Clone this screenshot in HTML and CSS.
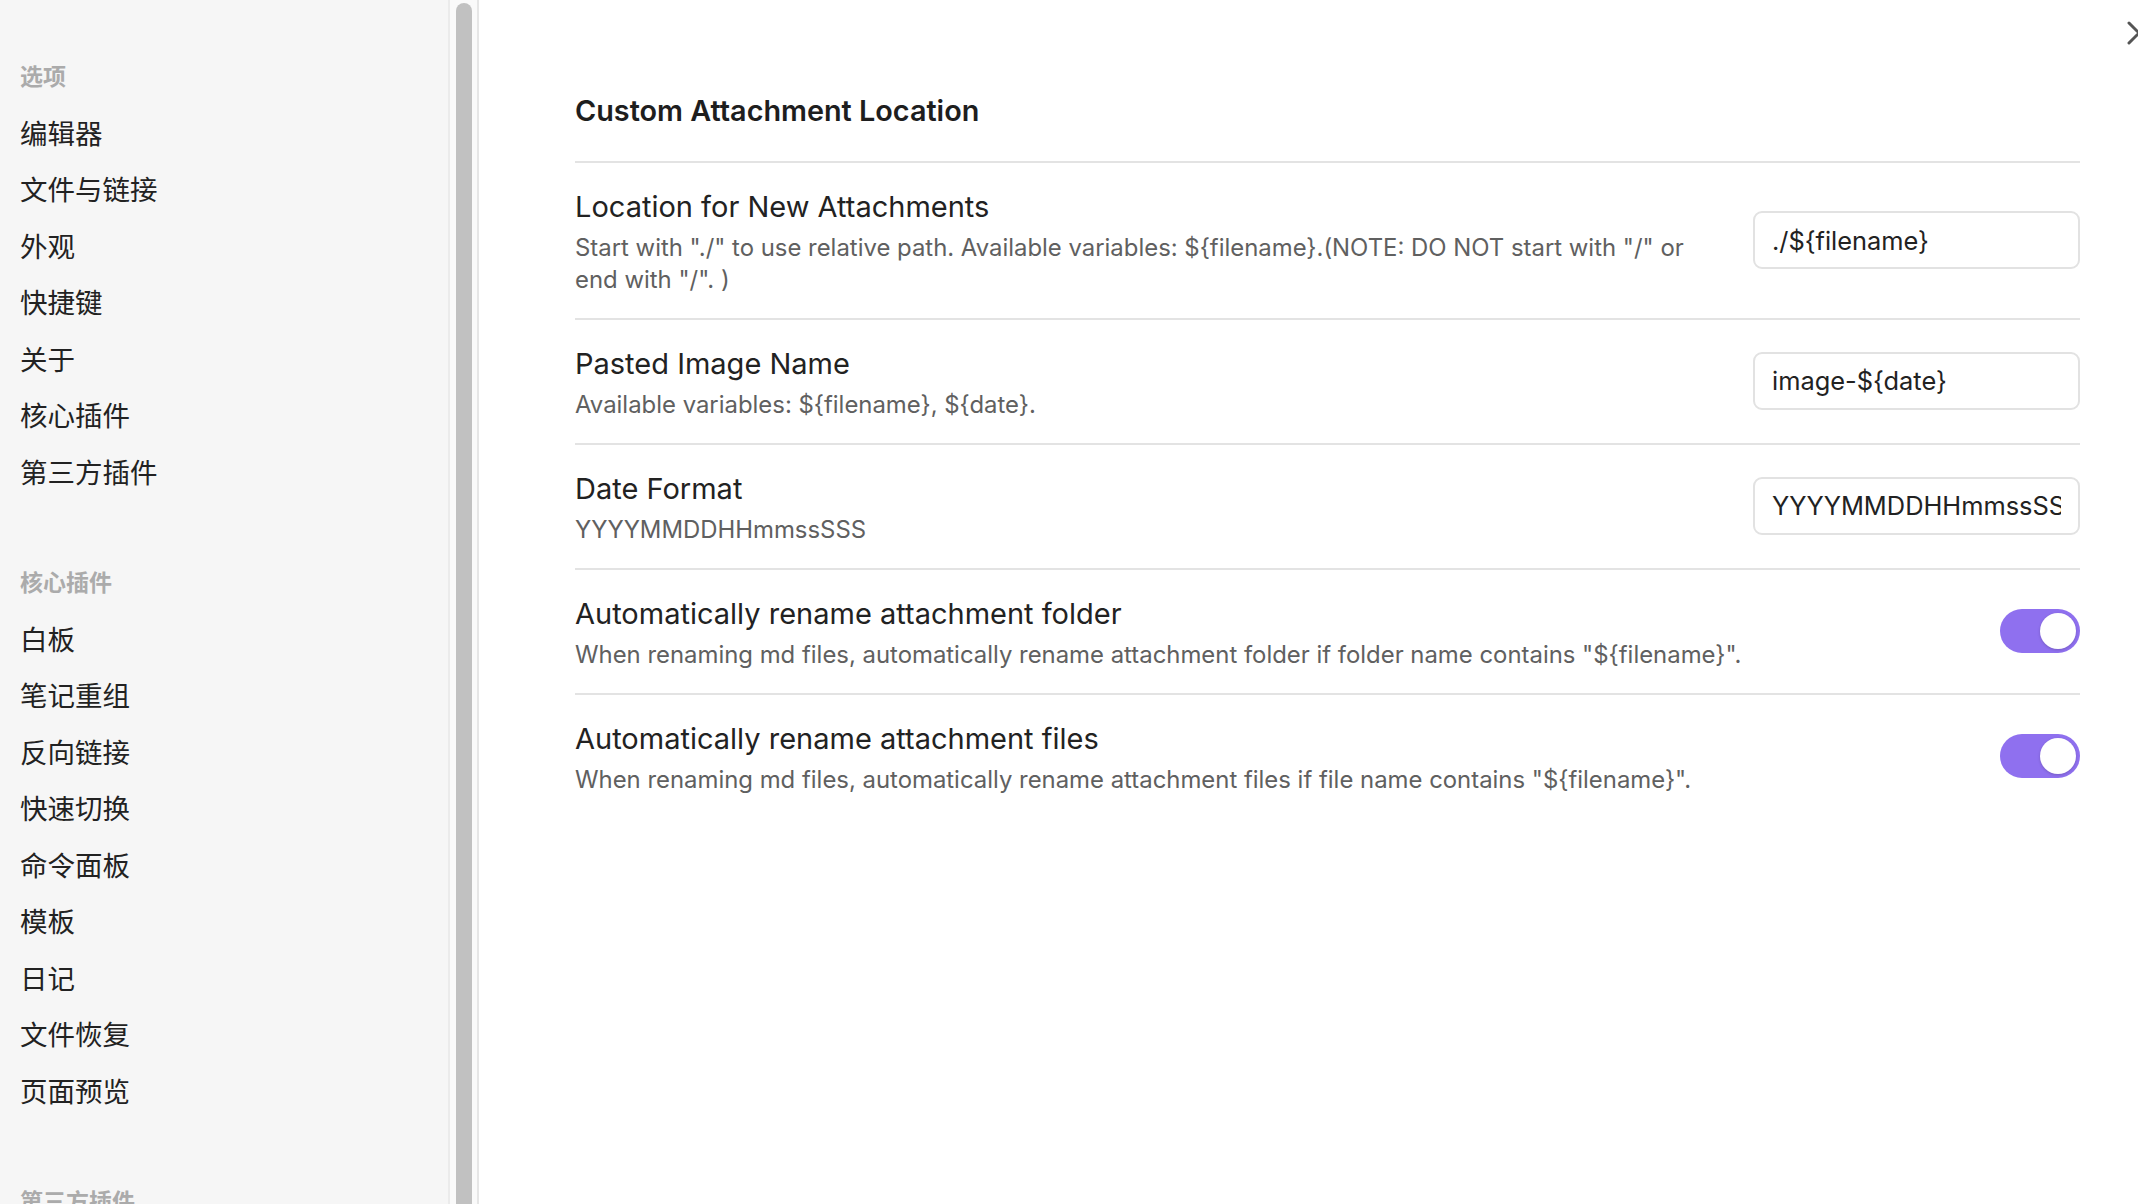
FILE: index.html
```html
<!DOCTYPE html>
<html lang="zh">
<head>
<meta charset="utf-8">
<title>Settings</title>
<link rel="stylesheet" href="styles.css">
</head>
<body>
<div class="app">
  <aside class="sidebar">
    <div class="nav-group">
      <div class="nav-header">选项</div>
      <div class="nav-item">编辑器</div>
      <div class="nav-item">文件与链接</div>
      <div class="nav-item">外观</div>
      <div class="nav-item">快捷键</div>
      <div class="nav-item">关于</div>
      <div class="nav-item">核心插件</div>
      <div class="nav-item">第三方插件</div>
    </div>
    <div class="nav-group">
      <div class="nav-header">核心插件</div>
      <div class="nav-item">白板</div>
      <div class="nav-item">笔记重组</div>
      <div class="nav-item">反向链接</div>
      <div class="nav-item">快速切换</div>
      <div class="nav-item">命令面板</div>
      <div class="nav-item">模板</div>
      <div class="nav-item">日记</div>
      <div class="nav-item">文件恢复</div>
      <div class="nav-item">页面预览</div>
    </div>
    <div class="nav-group">
      <div class="nav-header">第三方插件</div>
    </div>
  </aside>
  <div class="scroll-track"><div class="scroll-thumb"></div></div>
  <main class="content">
    <div class="close">
      <svg width="26" height="26" viewBox="0 0 26 26"><path d="M3 3 L23 23 M23 3 L3 23" stroke="#555" stroke-width="3" stroke-linecap="round" fill="none"/></svg>
    </div>
    <h2 class="title">Custom Attachment Location</h2>
    <div class="setting">
      <div class="info">
        <div class="name">Location for New Attachments</div>
        <div class="desc">Start with "./" to use relative path. Available variables: ${filename}.(NOTE: DO NOT start with "/" or end with "/". )</div>
      </div>
      <div class="control"><input class="text-input" type="text" value="./${filename}"></div>
    </div>
    <div class="setting">
      <div class="info">
        <div class="name">Pasted Image Name</div>
        <div class="desc">Available variables: ${filename}, ${date}.</div>
      </div>
      <div class="control"><input class="text-input" type="text" value="image-${date}"></div>
    </div>
    <div class="setting">
      <div class="info">
        <div class="name">Date Format</div>
        <div class="desc">YYYYMMDDHHmmssSSS</div>
      </div>
      <div class="control"><input class="text-input" type="text" value="YYYYMMDDHHmmssSSS"></div>
    </div>
    <div class="setting">
      <div class="info">
        <div class="name">Automatically rename attachment folder</div>
        <div class="desc">When renaming md files, automatically rename attachment folder if folder name contains "${filename}".</div>
      </div>
      <div class="control"><div class="toggle"><div class="knob"></div></div></div>
    </div>
    <div class="setting">
      <div class="info">
        <div class="name">Automatically rename attachment files</div>
        <div class="desc">When renaming md files, automatically rename attachment files if file name contains "${filename}".</div>
      </div>
      <div class="control"><div class="toggle"><div class="knob"></div></div></div>
    </div>
  </main>
</div>
</body>
</html>
```

FILE: styles.css
```css
html, body {
  margin: 0;
  padding: 0;
  height: 100%;
  overflow: hidden;
  background: #ffffff;
}

body {
  font-family: Inter, "Noto Sans CJK SC", sans-serif;
  color: #222222;
}

.app {
  display: flex;
  height: 1204px;
}

.sidebar {
  flex-shrink: 0;
  width: 428px;
  padding: 45.8px 0 0 20px;
  background: #f6f6f6;
  border-right: 2px solid #ebebeb;
  font-family: "Noto Sans CJK SC", sans-serif;
}

.nav-group + .nav-group {
  margin-top: 52.5px;
}

.nav-header {
  height: 58px;
  line-height: 58px;
  font-size: 23px;
  font-weight: 700;
  color: #ababab;
}

.nav-item {
  height: 56.5px;
  line-height: 56.5px;
  font-size: 27.5px;
  color: #222222;
}

.scroll-track {
  flex-shrink: 0;
  width: 21px;
  padding: 3px 0 0 6px;
  background: #fafafa;
  border-right: 2px solid #e6e6e6;
  display: flex;
  flex-direction: column;
}

.scroll-thumb {
  flex: 1;
  width: 16px;
  background: #c1c1c1;
  border-radius: 8px 8px 0 0;
}

.content {
  flex: 1;
  position: relative;
  padding: 92.5px 58px 0 96px;
  overflow: hidden;
}

.close {
  position: absolute;
  top: 20px;
  right: -14px;
  width: 26px;
  height: 26px;
}

.close svg {
  display: block;
}

.title {
  margin: 0;
  font-size: 28.8px;
  font-weight: 600;
  line-height: 36px;
  padding-bottom: 32.5px;
  border-bottom: 2px solid #e3e3e3;
  color: #1e1e1e;
}

.setting {
  display: flex;
  align-items: center;
  padding: 26px 0 22.4px;
}

.setting + .setting {
  border-top: 2px solid #e3e3e3;
}

.info {
  flex: 1;
  margin-right: 28px;
}

.name {
  font-size: 29px;
  line-height: 36px;
  color: #222222;
}

.desc {
  margin-top: 7.3px;
  font-size: 23.9px;
  line-height: 31.4px;
  color: #606060;
}

.control {
  flex-shrink: 0;
  display: flex;
  align-items: center;
  margin-top: -4px;
}

.text-input {
  width: 327px;
  height: 58px;
  box-sizing: border-box;
  margin: 0;
  padding: 0 17px;
  border: 2px solid #e2e2e2;
  border-radius: 9px;
  background: #ffffff;
  font-family: Inter, sans-serif;
  font-size: 25.4px;
  color: #222222;
  outline: none;
}

.toggle {
  width: 80px;
  height: 44px;
  box-sizing: border-box;
  padding: 4px;
  border-radius: 22px;
  background: #8f70ef;
  display: flex;
  justify-content: flex-end;
  align-items: center;
}

.knob {
  width: 36px;
  height: 36px;
  border-radius: 50%;
  background: #ffffff;
  box-shadow: 0 1px 3px rgba(0, 0, 0, 0.18);
}
```
